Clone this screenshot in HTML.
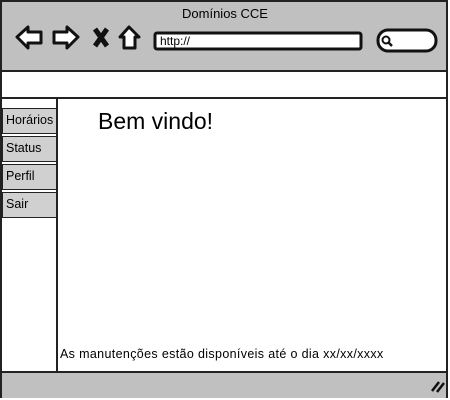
<!DOCTYPE html><html><head><style>
body{margin:0;width:450px;height:400px;background:#fff;font-family:"Liberation Sans",sans-serif;position:relative;overflow:hidden}
div{position:absolute;box-sizing:border-box}
.t{color:#000;white-space:nowrap}
.m{left:2px;width:55px;height:26px;background:#d0d0d0;border:1px solid #222;font-size:12.5px;padding:4px 0 0 3px}
</style></head><body>
<div style="left:0;top:0;width:448px;height:398px;border:2px solid #222;background:#fff"></div>
<div style="left:2px;top:2px;width:444px;height:70px;background:#c0c0c0;border-bottom:2px solid #222"></div>
<div class="t" style="left:0;width:450px;top:6px;text-align:center;font-size:13px">Domínios CCE</div>
<svg style="position:absolute;left:0;top:0" width="450" height="72">
<g fill="#fff" stroke="#111" stroke-width="3" stroke-linejoin="round">
<path d="M17 37 L28 27 L28 32 L41 32 L41 43 L28 43 L28 48 Z"/>
<path d="M78 37 L67 27 L67 32 L54 32 L54 43 L67 43 L67 48 Z"/>
<path d="M120 37 L129 27 L139 37 L135 37 L135 48 L124 48 L124 37 Z"/>
<rect x="155" y="33" width="206" height="16" rx="2"/>
<rect x="378" y="30" width="58" height="21" rx="10"/>
</g>
<path d="M95 29 L107 46 M107 29 L95 46" stroke="#111" stroke-width="5"/>
<circle cx="386" cy="40" r="3.5" fill="none" stroke="#111" stroke-width="2"/>
<path d="M388 42 L392 46" stroke="#111" stroke-width="2.5"/>
</svg>
<div class="t" style="left:160px;top:34px;font-size:12px">http://</div>
<div style="left:2px;top:72px;width:444px;height:27px;border-bottom:2px solid #222"></div>
<div style="left:56px;top:99px;width:2px;height:273px;background:#222"></div>
<div class="m t" style="top:108px">Horários</div>
<div class="m t" style="top:136px">Status</div>
<div class="m t" style="top:164px">Perfil</div>
<div class="m t" style="top:192px">Sair</div>
<div class="t" style="left:98px;top:108px;font-size:23px">Bem vindo!</div>
<div class="t" style="left:60px;top:347px;font-size:12.5px;letter-spacing:0.35px">As manutenções estão disponíveis até o dia xx/xx/xxxx</div>
<div style="left:2px;top:371px;width:444px;height:27px;background:#c0c0c0;border-top:2px solid #222"></div>
<svg style="position:absolute;left:0;top:0" width="450" height="400"><path d="M432 391 L439 382 M437 392 L444 383" stroke="#111" stroke-width="2.5"/></svg>
</body></html>
